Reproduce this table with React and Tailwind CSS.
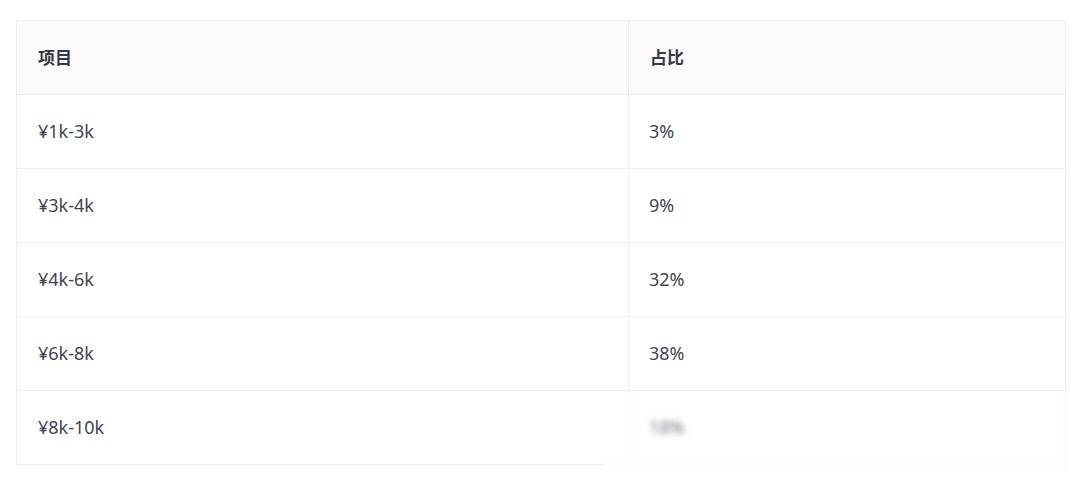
const rows = [
  ['¥1k-3k', '3%'],
  ['¥3k-4k', '9%'],
  ['¥4k-6k', '32%'],
  ['¥6k-8k', '38%'],
  ['¥8k-10k', '18%'],
];

export default function App() {
  return (
    <div
      className="relative w-[1080px] h-[479px] bg-white pt-5 pl-4"
      style={{ fontFamily: '"Noto Sans", "Noto Sans CJK SC", sans-serif' }}
    >
      <table className="w-[1050px] border-collapse table-fixed text-[18px]">
        <colgroup>
          <col className="w-[612px]" />
          <col />
        </colgroup>
        <thead>
          <tr className="h-[74px] bg-[#fafafa]">
            <th className="border border-[#efefef] pl-[21px] text-left text-[17px] font-bold text-[#353a42]">项目</th>
            <th className="border border-[#efefef] pl-[21px] text-left text-[17px] font-bold text-[#353a42]">占比</th>
          </tr>
        </thead>
        <tbody>
          {rows.map(([name, pct]) => (
            <tr key={name} className="h-[74px]">
              <td className="border border-[#efefef] pl-[21px] text-[#3f4550]">{name}</td>
              <td className="border border-[#efefef] pl-[20px] text-[#3f4550]">{pct}</td>
            </tr>
          ))}
        </tbody>
      </table>
      {/* blurred watermark patch over the last cell */}
      <div className="absolute left-[603px] top-[392px] w-[477px] h-[87px] bg-white/30 backdrop-blur-[3px]" />
    </div>
  );
}
